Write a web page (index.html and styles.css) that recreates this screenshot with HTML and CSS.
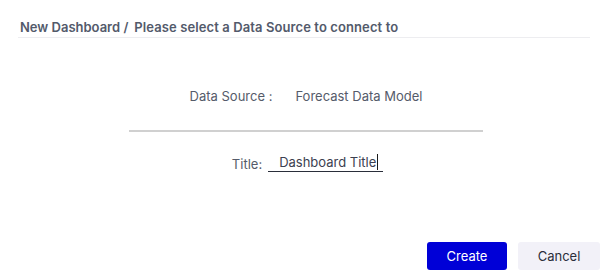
FILE: index.html
```html
<!DOCTYPE html>
<html>
<head>
<meta charset="utf-8">
<link rel="stylesheet" href="styles.css">
</head>
<body>
<div class="page">
  <div class="header">
    <span class="crumb">New Dashboard /</span>
    <span class="crumb-title">Please select a Data Source to connect to</span>
  </div>
  <div class="content">
    <div class="source-row">
      <span class="label">Data Source :</span>
      <span class="value">Forecast Data Model</span>
    </div>
    <div class="divider"></div>
    <div class="title-row">
      <span class="label">Title:</span>
      <div class="input"><span class="input-text">Dashboard Title</span><span class="caret"></span></div>
    </div>
  </div>
  <div class="actions">
    <button class="btn btn-primary">Create</button>
    <button class="btn btn-secondary">Cancel</button>
  </div>
</div>
</body>
</html>
```
FILE: styles.css
```css
html, body {
  margin: 0;
  padding: 0;
  background: #ffffff;
}
body {
  font-family: Inter, "Noto Sans", sans-serif;
  color: #555b6a;
  width: 612px;
  height: 280px;
  overflow: hidden;
}
.page {
  display: flex;
  flex-direction: column;
  height: 280px;
}
.header {
  margin: 0 22px 0 18px;
  padding: 19px 0 0 2px;
  height: 18px;
  border-bottom: 1px solid #ededf0;
  font-size: 13px;
  font-weight: 600;
  color: #535a6b;
  display: flex;
  gap: 6px;
  line-height: 16px;
}
.crumb-title {
  letter-spacing: 0.1px;
}
.content {
  display: flex;
  flex-direction: column;
  align-items: center;
  padding-top: 50px;
}
.source-row {
  display: flex;
  gap: 23px;
  font-size: 13px;
  line-height: 16px;
  color: #555b6a;
}
.divider {
  margin-top: 26px;
  width: 354px;
  height: 2px;
  background: #d0d0d0;
}
.title-row {
  margin-top: 20px;
  display: flex;
  align-items: flex-end;
  gap: 6px;
  font-size: 13px;
  line-height: 16px;
  margin-left: 3px;
}
.input {
  width: 104px;
  padding-left: 11px;
  border-bottom: 1px solid #2a2e3a;
  display: flex;
  align-items: center;
  height: 19px;
  color: #3c4150;
}
.caret {
  display: inline-block;
  width: 1px;
  height: 16px;
  background: #1a1a1a;
  margin-left: 1px;
}
.actions {
  margin-top: auto;
  margin-bottom: 10px;
  display: flex;
  justify-content: flex-end;
  gap: 11px;
  padding-right: 12px;
}
.btn {
  font-family: Inter, "Noto Sans", sans-serif;
  font-size: 13px;
  height: 28px;
  border: none;
  border-radius: 3px;
  padding: 0;
  cursor: pointer;
}
.btn-primary {
  width: 80px;
  background: #0000d7;
  color: #ffffff;
}
.btn-secondary {
  width: 82px;
  background: #f2f1f8;
  color: #2a2e3a;
}
```
